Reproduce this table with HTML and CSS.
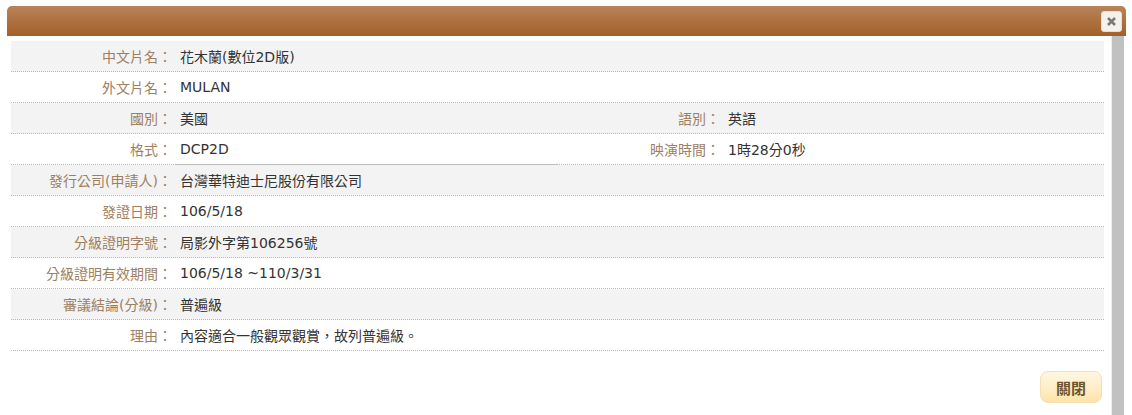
FILE: index.html
```html
<!DOCTYPE html>
<html lang="zh-Hant">
<head>
<meta charset="utf-8">
<title>分級證明</title>
<link rel="stylesheet" href="styles.css">
</head>
<body>
<div class="dialog">
  <div class="titlebar">
    <button class="close" type="button" aria-label="close">
      <svg width="11" height="11" viewBox="0 0 11 11"><path d="M2 2 L9 9 M9 2 L2 9" stroke="#7a7a7a" stroke-width="2.6" stroke-linecap="butt"/></svg>
    </button>
  </div>
  <div class="body">
    <div class="content">
      <div class="rows">
        <div class="row alt"><div class="label">中文片名：</div><div class="value span3">花木蘭(數位2D版)</div></div>
        <div class="row"><div class="label">外文片名：</div><div class="value span3">MULAN</div></div>
        <div class="row alt"><div class="label">國別：</div><div class="value">美國</div><div class="label">語別：</div><div class="value">英語</div></div>
        <div class="row"><div class="label">格式：</div><div class="value underline">DCP2D</div><div class="label">映演時間：</div><div class="value">1時28分0秒</div></div>
        <div class="row alt"><div class="label">發行公司(申請人)：</div><div class="value span3">台灣華特迪士尼股份有限公司</div></div>
        <div class="row"><div class="label">發證日期：</div><div class="value span3">106/5/18</div></div>
        <div class="row alt"><div class="label">分級證明字號：</div><div class="value span3">局影外字第106256號</div></div>
        <div class="row"><div class="label">分級證明有效期間：</div><div class="value span3">106/5/18 ~110/3/31</div></div>
        <div class="row alt"><div class="label">審議結論(分級)：</div><div class="value span3">普遍級</div></div>
        <div class="row"><div class="label">理由：</div><div class="value span3">內容適合一般觀眾觀賞，故列普遍級。</div></div>
      </div>
      <div class="footer"><button class="btn" type="button">關閉</button></div>
    </div>
    <div class="scrollbar"></div>
  </div>
</div>
</body>
</html>
```

FILE: styles.css
```css
html, body {
  margin: 0;
  padding: 0;
  background: #ffffff;
}
body {
  font-family: "DejaVu Sans", "Noto Sans CJK TC", sans-serif;
  font-size: 14px;
  color: #333333;
  overflow: hidden;
  height: 415px;
}
.dialog {
  margin: 6px 0 0 7px;
  width: 1119px;
  height: 409px;
  display: flex;
  flex-direction: column;
}
.titlebar {
  height: 30px;
  flex: none;
  border-radius: 5px 5px 0 0;
  background: linear-gradient(to bottom, #b9845a 0%, #ac6f3d 55%, #a2612b 100%);
  display: flex;
  justify-content: flex-end;
  align-items: flex-start;
  padding: 5px 4px 0 0;
  box-sizing: border-box;
}
.close {
  width: 21px;
  height: 21px;
  padding: 0;
  margin: 0;
  border: 1px solid #e8ddd3;
  border-radius: 3px;
  background: #f5f1ed;
  display: flex;
  align-items: center;
  justify-content: center;
  box-sizing: border-box;
}
.close svg { display: block; }
.body {
  flex: 1;
  display: flex;
  min-height: 0;
}
.content {
  width: 1093px;
  padding: 5px 0 0 4px;
  flex: none;
}
.rows {
  display: flex;
  flex-direction: column;
}
.row {
  display: grid;
  grid-template-columns: 161px 448px 100px 384px;
  height: 30px;
  border-bottom: 1px dotted #b9b9b9;
  background: #ffffff;
}
.row.alt {
  background: #f3f3f3;
}
.label {
  color: #9e8061;
  text-align: right;
  display: flex;
  align-items: center;
  justify-content: flex-end;
  white-space: nowrap;
}
.value {
  display: flex;
  align-items: center;
  padding-left: 8px;
  white-space: nowrap;
}
.value.span3 {
  grid-column: 2 / 5;
}
.value.underline {
  margin: 0 0 -1px 4px;
  padding-left: 4px;
  width: 381px;
  box-sizing: border-box;
  border-bottom: 1px solid #bdbdbd;
}
.footer {
  display: flex;
  justify-content: flex-end;
  padding: 20px 2px 0 0;
}
.btn {
  width: 62px;
  height: 32px;
  border: 1px solid #f6dfb2;
  border-radius: 8px;
  background: linear-gradient(to bottom, #fff7e3 0%, #ffecc2 60%, #fde3a8 100%);
  color: #6e5530;
  font-family: "Noto Sans CJK TC", sans-serif;
  font-size: 15px;
  font-weight: 700;
  padding: 0;
  box-sizing: border-box;
}
.scrollbar {
  width: 12px;
  margin-left: 7px;
  background: #c1c1c1;
  border-left: 1px solid #eeeeee;
  flex: none;
}
```
